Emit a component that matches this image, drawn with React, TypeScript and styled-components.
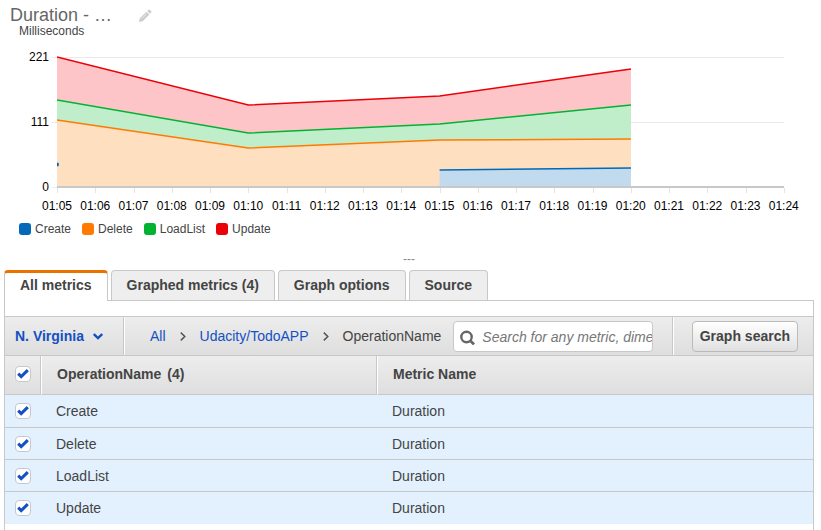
import React from "react";
import styled, { createGlobalStyle, css } from "styled-components";

const GlobalStyle = createGlobalStyle`
  *, *::before, *::after { box-sizing: border-box; }
  html { overflow: hidden; }
  body {
    margin: 0;
    background: #fff;
    color: #444;
    font-family: "Liberation Sans", Arial, sans-serif;
    font-size: 14px;
    line-height: 16px;
  }
`;

const line = "#c8c8c8";
const link = "#1450c2";
const barFill = "linear-gradient(#ededed, #dedede)";

const Page = styled.div`
  display: flex;
  flex-direction: column;
  height: 100vh;
`;

/* ---------- graph ---------- */

const GraphSection = styled.section`
  flex: none;
  padding-top: 4px;
`;

const TitleRow = styled.header`
  display: flex;
  align-items: center;
  gap: 24px;
  padding-left: 10px;
  height: 22px;
`;

const Title = styled.h1`
  margin: 0;
  width: 104px;
  font-size: 18px;
  font-weight: 400;
  line-height: 22px;
  color: #666;
`;

const IconButton = styled.button`
  display: flex;
  padding: 2px 0 0;
  border: 0;
  background: none;
  color: #ccc;
  cursor: pointer;
`;

const Unit = styled.div`
  padding-left: 19px;
  margin-bottom: 21px;
  font-size: 12px;
  line-height: 10px;
`;

const Plot = styled.figure`
  display: grid;
  grid-template-columns: 49px minmax(0, 1fr);
  column-gap: 8px;
  margin: 0 37px 0 0;
  font-size: 12px;
  line-height: 14px;
  color: #000;
`;

const ValueAxis = styled.div`
  display: flex;
  flex-direction: column;
  justify-content: space-between;
  height: 144px;
  margin-top: -7px;
  text-align: right;
`;

const Drawing = styled.svg`
  display: block;
  width: 100%;
  height: 138px;
  overflow: visible;
`;

const TimeAxis = styled.div`
  grid-column: 2;
  display: flex;
  justify-content: space-between;
  margin-top: 4px;
`;

const TimeLabel = styled.span`
  display: flex;
  justify-content: center;
  width: 0;
  white-space: nowrap;
`;

const Legend = styled.ul`
  display: flex;
  gap: 11px;
  margin: 9px 0 0;
  padding: 0 0 0 19px;
  list-style: none;
  font-size: 12px;
  line-height: 14px;
`;

const LegendItem = styled.li`
  display: flex;
  align-items: center;
  gap: 4px;
`;

const Swatch = styled.span<{ $color: string }>`
  width: 12px;
  height: 12px;
  border-radius: 3px;
  background: ${(p) => p.$color};
`;

const Splitter = styled.div`
  margin-top: 15px;
  height: 19px;
  padding-right: 3px;
  text-align: center;
  font-size: 12px;
  color: #888;
`;

/* ---------- tabs ---------- */

const Tabs = styled.div`
  display: flex;
  flex: none;
  gap: 3px;
  padding: 0 4px;
`;

const Tab = styled.button<{ $active?: boolean }>`
  height: 30px;
  padding: 0 15px 2px;
  border: 1px solid ${line};
  border-bottom: 0;
  border-radius: 4px 4px 0 0;
  background: #eee;
  color: #444;
  font: bold 14px/16px "Liberation Sans", Arial, sans-serif;
  cursor: pointer;
  ${(p) =>
    p.$active &&
    css`
      height: 31px;
      margin-bottom: -1px;
      border-top: 3px solid #ec7200;
      background: #fff;
      padding-bottom: 5px;
      z-index: 1;
    `}
`;

const Panel = styled.main`
  flex: 1;
  margin: 0 7px 0 4px;
  padding-top: 15px;
  border: 1px solid ${line};
  border-bottom: 0;
`;

/* ---------- toolbar ---------- */

const Toolbar = styled.div`
  display: flex;
  align-items: stretch;
  height: 40px;
  border: 1px solid ${line};
  border-width: 1px 0;
  background: ${barFill};
`;

const RegionButton = styled.button`
  display: flex;
  align-items: center;
  gap: 9px;
  flex: none;
  width: 119px;
  padding: 0 0 0 10px;
  border: 0;
  border-right: 1px solid ${line};
  background: none;
  box-shadow: 1px 0 #fff;
  color: ${link};
  font: bold 14px/16px "Liberation Sans", Arial, sans-serif;
  white-space: nowrap;
  cursor: pointer;
`;

const Crumbs = styled.nav`
  display: flex;
  align-items: center;
  gap: 14px;
  flex: none;
  padding: 0 12px 0 26px;
`;

const CrumbLink = styled.a`
  color: ${link};
  text-decoration: none;
`;

const SearchBox = styled.label`
  display: flex;
  align-items: center;
  flex: 1;
  min-width: 0;
  gap: 7px;
  height: 31px;
  margin: 4px 19px 0 0;
  padding-left: 6px;
  border: 1px solid ${line};
  border-radius: 4px;
  background: #fff;
  color: #666;
`;

const SearchInput = styled.input`
  flex: 1;
  min-width: 0;
  height: 28px;
  padding: 0;
  border: 0;
  outline: 0;
  background: none;
  color: #444;
  font: 14px/16px "Liberation Sans", Arial, sans-serif;
  &::placeholder {
    color: #777;
    font-style: italic;
  }
`;

const Actions = styled.div`
  flex: none;
  padding: 4px 15px 0 19px;
  border-left: 1px solid ${line};
  box-shadow: inset 1px 0 #fff;
`;

const GraphSearchButton = styled.button`
  height: 31px;
  padding: 0 7px 2px;
  border: 1px solid #bbb;
  border-radius: 4px;
  background: linear-gradient(#fff, #e0e0e0);
  color: #444;
  font: bold 14px/16px "Liberation Sans", Arial, sans-serif;
  cursor: pointer;
`;

/* ---------- table ---------- */

const Table = styled.table`
  width: 100%;
  table-layout: fixed;
  border-collapse: separate;
  border-spacing: 0;
  text-align: left;
`;

const HeadRow = styled.tr`
  height: 39px;
  background: ${barFill};
`;

const HeadCell = styled.th<{ $width?: number }>`
  width: ${(p) => (p.$width ? `${p.$width}px` : "auto")};
  padding: 0 0 3px 15px;
  border-bottom: 1px solid ${line};
  &:first-child {
    padding: 0 0 2px 10px;
  }
  &:not(:last-child) {
    border-right: 1px solid ${line};
  }
  &:not(:first-child) {
    border-left: 1px solid #fff;
  }
`;

const Count = styled.span`
  margin-left: 6px;
`;

const Row = styled.tr`
  height: 32px;
  background: #e3f1ff;
  &:first-child {
    height: 33px;
  }
`;

const Cell = styled.td`
  padding: 0 0 0 15px;
  border-bottom: 1px solid ${line};
  &:first-child {
    padding-left: 10px;
  }
  ${Row}:last-child & {
    border-bottom: 0;
  }
`;

const CheckWrap = styled.label`
  display: grid;
  width: 16px;
  height: 16px;
  > * {
    grid-area: 1 / 1;
  }
`;

const CheckInput = styled.input`
  appearance: none;
  width: 16px;
  height: 16px;
  margin: 0;
  border: 1px solid ${line};
  border-radius: 4px;
  background: #fff;
  & + svg {
    visibility: hidden;
    pointer-events: none;
    z-index: 1;
  }
  &:checked + svg {
    visibility: visible;
  }
`;

/* ---------- data ---------- */

type Series = {
  name: string;
  color: string;
  fill: string;
  points: [minute: number, y: number][];
};

const PLOT_WIDTH = 727;
const BASE = 130;
const minutes = Array.from({ length: 20 }, (_, i) => i);
const px = (minute: number) => (minute * PLOT_WIDTH) / 19;

const series: Series[] = [
  { name: "Create", color: "#0069b8", fill: "#c2daed", points: [[10, 113], [15, 111]] },
  { name: "Delete", color: "#ff7a00", fill: "#fedfc0", points: [[0, 63], [5, 91], [10, 83], [15, 82]] },
  { name: "LoadList", color: "#02b233", fill: "#c0eecb", points: [[0, 43], [5, 76], [10, 67], [15, 48]] },
  { name: "Update", color: "#eb0008", fill: "#fdc5c7", points: [[0, 0], [5, 48], [10, 39], [15, 12]] },
];

const toPoints = (s: Series) => s.points.map(([m, y]) => `${px(m)},${y}`).join(" ");

const toArea = (s: Series) => {
  const first = px(s.points[0][0]);
  const last = px(s.points[s.points.length - 1][0]);
  return `${first},${BASE} ${toPoints(s)} ${last},${BASE}`;
};

/* ---------- components ---------- */

const Chart = () => (
  <Plot aria-label="Duration in milliseconds">
    <ValueAxis>
      <span>221</span>
      <span>111</span>
      <span>0</span>
    </ValueAxis>
    <Drawing viewBox={`0 0 ${PLOT_WIDTH} 138`} preserveAspectRatio="none" aria-hidden="true">
      <defs>
        <clipPath id="plot-area">
          <rect x="0" y="-2" width={PLOT_WIDTH} height="140" />
        </clipPath>
      </defs>
      <path
        d={`M-5 .5H${PLOT_WIDTH}M-5 65.5H${PLOT_WIDTH}M-5 130.5H0`}
        stroke="#eaeaea"
      />
      {minutes.map((m) => (
        <path key={m} d={`M${Math.round(px(m)) + 0.5} 131v5`} stroke="#e4e4e4" />
      ))}
      <g clipPath="url(#plot-area)">
        {[...series].reverse().map((s) => (
          <g key={s.name}>
            <polygon points={toArea(s)} fill={s.fill} />
            <polyline points={toPoints(s)} fill="none" stroke={s.color} strokeWidth="1.5" />
          </g>
        ))}
        <circle cx="0" cy="107.5" r="2" fill="#0069b8" />
      </g>
      <path d={`M0 130H${PLOT_WIDTH}`} stroke="#c8c8c8" strokeWidth="2" />
    </Drawing>
    <TimeAxis>
      {minutes.map((m) => (
        <TimeLabel key={m}>{`01:${String(m + 5).padStart(2, "0")}`}</TimeLabel>
      ))}
    </TimeAxis>
  </Plot>
);

const CrumbArrow = () => (
  <svg width="6" height="9" viewBox="0 0 6 9" fill="none" stroke="#555" strokeWidth="1.5" aria-hidden="true">
    <path d="M.8 .6 4.8 4.5 .8 8.4" />
  </svg>
);

const Check = ({ label }: { label: string }) => (
  <CheckWrap>
    <CheckInput type="checkbox" defaultChecked aria-label={label} />
    <svg width="16" height="16" viewBox="0 0 16 16" fill="none" stroke={link} strokeWidth="3" aria-hidden="true">
      <path d="M3.2 7.6 6.2 10.6 12.8 4.2" />
    </svg>
  </CheckWrap>
);

export default function App() {
  return (
    <Page>
      <GlobalStyle />
      <GraphSection>
        <TitleRow>
          <Title>Duration - …</Title>
          <IconButton type="button" aria-label="Edit title">
            <svg width="14" height="14" viewBox="0 0 14 14" fill="currentColor" aria-hidden="true">
              <path d="M1 13 1.8 9.3 8.5 2.7 11.4 5.6 4.7 12.2ZM9.2 2 10.6.7Q11.2.2 11.8.8L13.2 2.2Q13.8 2.8 13.2 3.5L12.1 4.8Z" />
              <path d="M3.6 9.6 8.7 4.6" stroke="#fff" strokeWidth=".6" />
            </svg>
          </IconButton>
        </TitleRow>
        <Unit>Milliseconds</Unit>
        <Chart />
        <Legend>
          {series.map((s) => (
            <LegendItem key={s.name}>
              <Swatch $color={s.color} />
              {s.name}
            </LegendItem>
          ))}
        </Legend>
        <Splitter>---</Splitter>
      </GraphSection>

      <Tabs role="tablist">
        <Tab type="button" role="tab" aria-selected="true" $active>All metrics</Tab>
        <Tab type="button" role="tab" aria-selected="false">Graphed metrics (4)</Tab>
        <Tab type="button" role="tab" aria-selected="false">Graph options</Tab>
        <Tab type="button" role="tab" aria-selected="false">Source</Tab>
      </Tabs>

      <Panel>
        <Toolbar>
          <RegionButton type="button">
            N. Virginia
            <svg width="10" height="7" viewBox="0 0 10 7" fill="none" stroke="currentColor" strokeWidth="2.4" aria-hidden="true">
              <path d="M.8 1 5 5 9.2 1" />
            </svg>
          </RegionButton>
          <Crumbs aria-label="Breadcrumb">
            <CrumbLink href="#all">All</CrumbLink>
            <CrumbArrow />
            <CrumbLink href="#todo">Udacity/TodoAPP</CrumbLink>
            <CrumbArrow />
            <span>OperationName</span>
          </Crumbs>
          <SearchBox>
            <svg width="15" height="16" viewBox="0 0 15 16" fill="none" stroke="currentColor" aria-hidden="true">
              <circle cx="6.5" cy="8" r="5.2" strokeWidth="2.4" />
              <path d="M10.4 11.8 14 15.4" strokeWidth="2.8" />
            </svg>
            <SearchInput type="text" aria-label="Search metrics" placeholder="Search for any metric, dimension or resource id" />
          </SearchBox>
          <Actions>
            <GraphSearchButton type="button">Graph search</GraphSearchButton>
          </Actions>
        </Toolbar>

        <Table>
          <thead>
            <HeadRow>
              <HeadCell $width={36}>
                <Check label="Select all" />
              </HeadCell>
              <HeadCell $width={336}>
                OperationName<Count>(4)</Count>
              </HeadCell>
              <HeadCell>Metric Name</HeadCell>
            </HeadRow>
          </thead>
          <tbody>
            {series.map((s) => (
              <Row key={s.name}>
                <Cell>
                  <Check label={`Select ${s.name}`} />
                </Cell>
                <Cell>{s.name}</Cell>
                <Cell>Duration</Cell>
              </Row>
            ))}
          </tbody>
        </Table>
      </Panel>
    </Page>
  );
}
